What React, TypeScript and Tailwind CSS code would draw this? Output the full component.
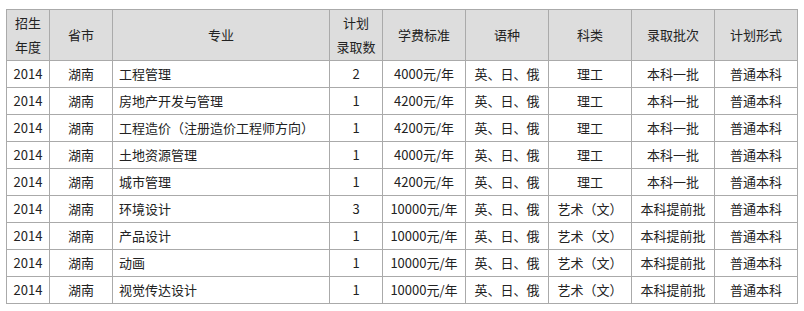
import React from 'react';

const rows = [
  ['工程管理', '2', '4000元/年', '理工', '本科一批'],
  ['房地产开发与管理', '1', '4200元/年', '理工', '本科一批'],
  ['工程造价（注册造价工程师方向）', '1', '4200元/年', '理工', '本科一批'],
  ['土地资源管理', '1', '4000元/年', '理工', '本科一批'],
  ['城市管理', '1', '4200元/年', '理工', '本科一批'],
  ['环境设计', '3', '10000元/年', '艺术（文）', '本科提前批'],
  ['产品设计', '1', '10000元/年', '艺术（文）', '本科提前批'],
  ['动画', '1', '10000元/年', '艺术（文）', '本科提前批'],
  ['视觉传达设计', '1', '10000元/年', '艺术（文）', '本科提前批'],
];

const widths = [43, 63, 217, 53, 83, 83, 83, 83, 83];

export default function App() {
  const th = 'border border-[#aaaaaa] bg-[#dddddd] font-normal text-center px-1 py-px leading-6';
  const td = 'border border-[#aaaaaa] text-center px-1 py-px leading-6 whitespace-nowrap';
  return (
    <div
      className="w-[804px] h-[311px] bg-white pt-[9px] pl-[6px] text-[13px] text-[#222]"
      style={{ fontFamily: '"Noto Sans CJK SC", "Noto Sans", sans-serif' }}
    >
      <table className="border-collapse table-fixed w-[791px]">
        <colgroup>
          {widths.map((w, i) => (
            <col key={i} style={{ width: w }} />
          ))}
        </colgroup>
        <thead>
          <tr>
            <th className={th}>招生<br />年度</th>
            <th className={th}>省市</th>
            <th className={th}>专业</th>
            <th className={th}>计划<br />录取数</th>
            <th className={th}>学费标准</th>
            <th className={th}>语种</th>
            <th className={th}>科类</th>
            <th className={th}>录取批次</th>
            <th className={th}>计划形式</th>
          </tr>
        </thead>
        <tbody>
          {rows.map((r, i) => (
            <tr key={i}>
              <td className={td}>2014</td>
              <td className={td}>湖南</td>
              <td className={`${td} !text-left !pl-[6px]`}>{r[0]}</td>
              <td className={td}>{r[1]}</td>
              <td className={td}>{r[2]}</td>
              <td className={td}>英、日、俄</td>
              <td className={td}>{r[3]}</td>
              <td className={td}>{r[4]}</td>
              <td className={td}>普通本科</td>
            </tr>
          ))}
        </tbody>
      </table>
    </div>
  );
}
